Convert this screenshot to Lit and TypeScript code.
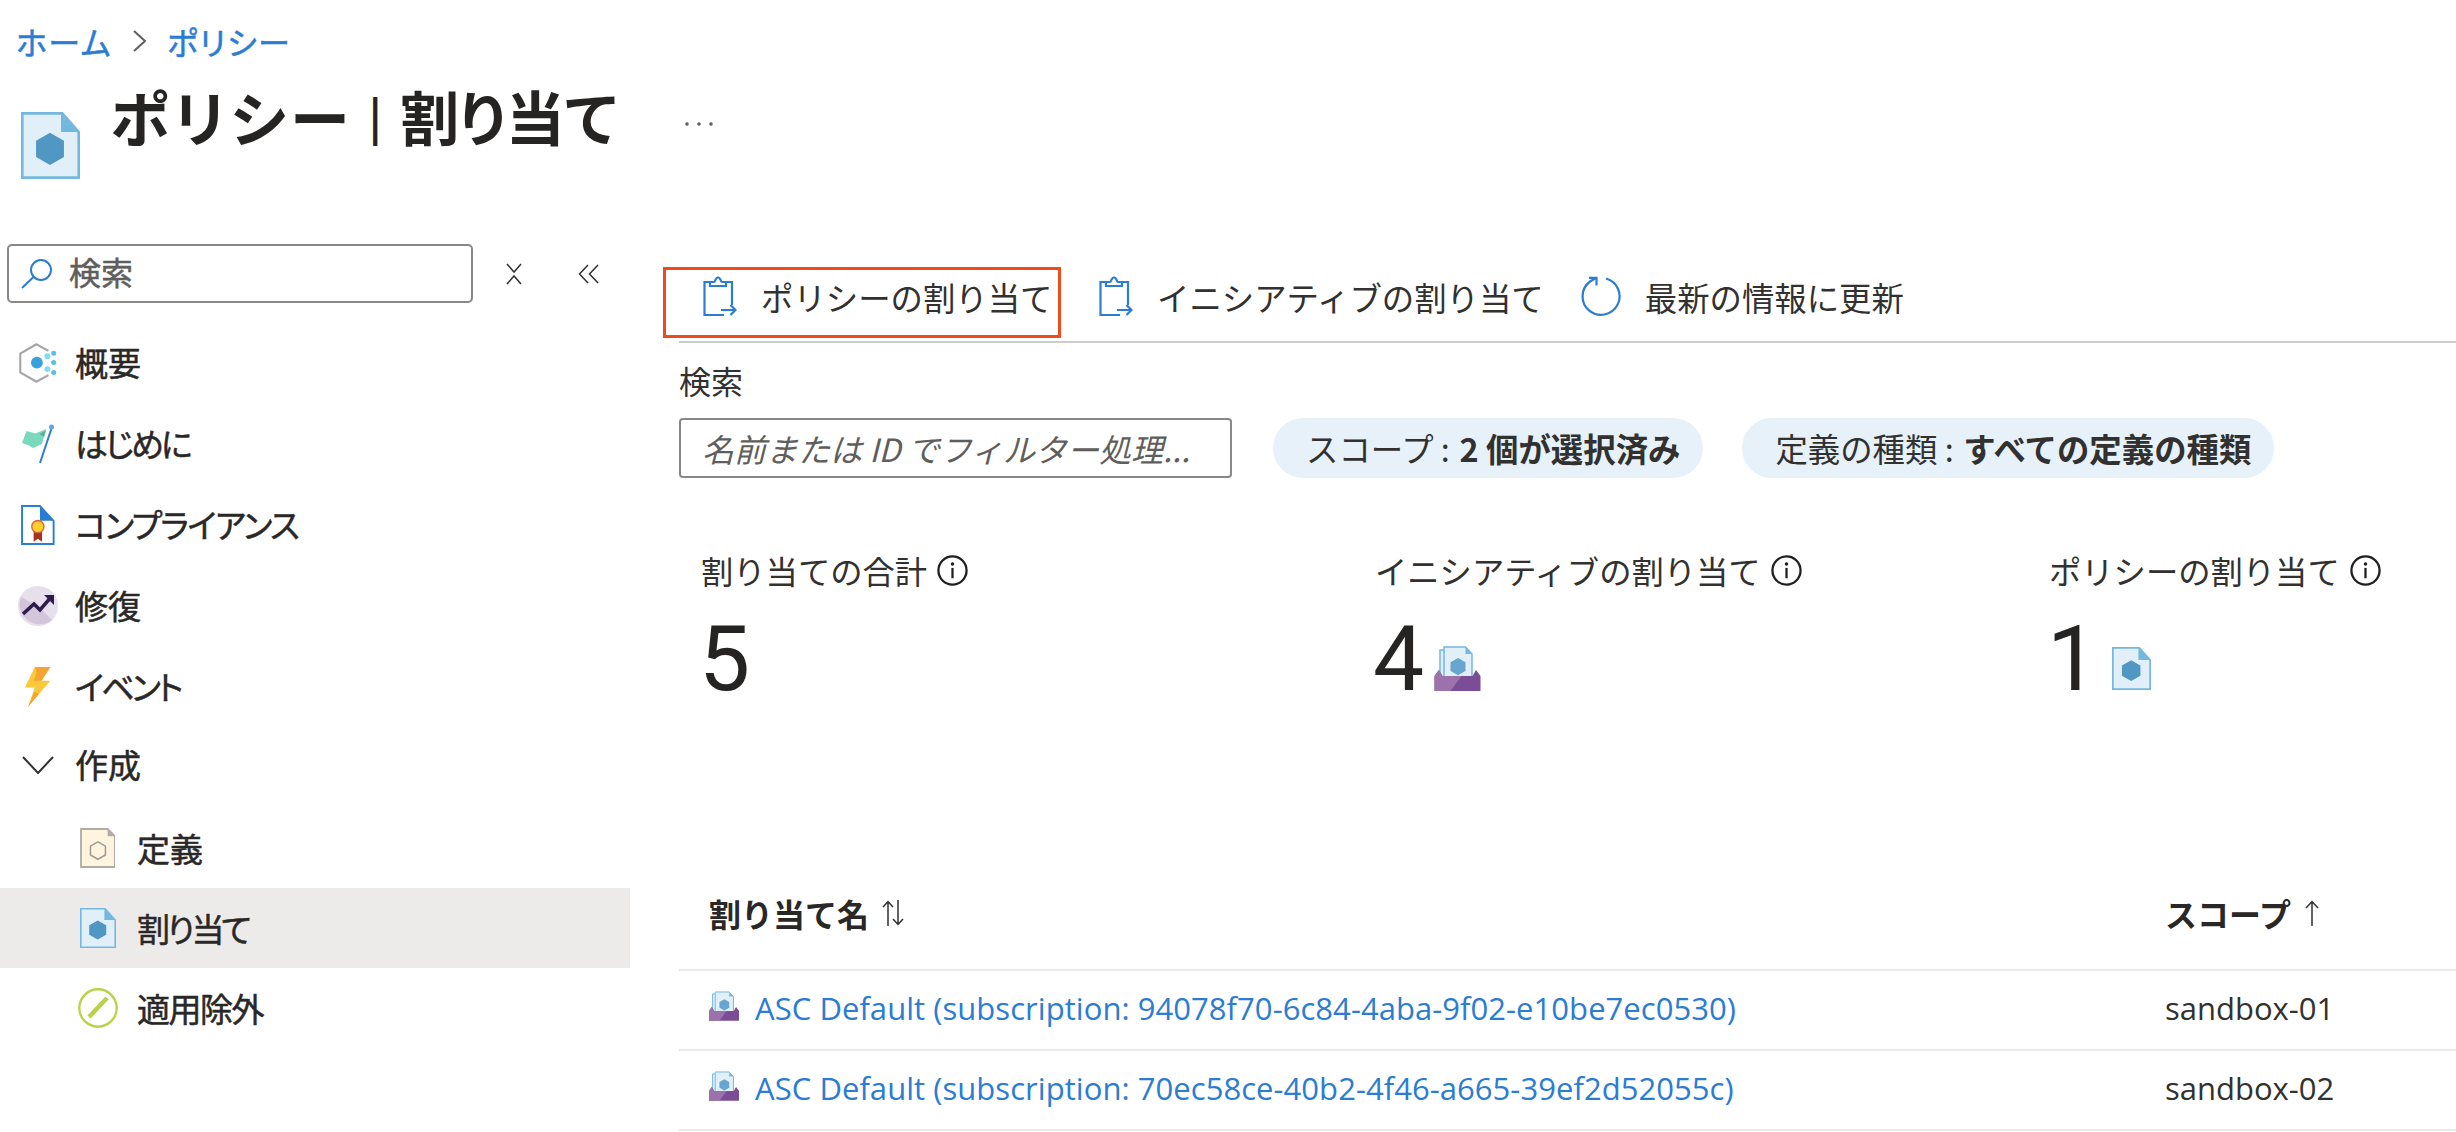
import { LitElement, html, css } from "lit";
import { customElement } from "lit/decorators.js";

const policyIcon = (cls: string) => html`<svg class=${cls} viewBox="0 0 18 20" preserveAspectRatio="none">
  <path d="M.4.4H12.6L17.6 6V19.6H.4Z" fill="#e1f0f8" stroke="#74b8e0" stroke-width=".8"/>
  <path d="M12.2.4L17.6 6H12.2Z" fill="#74b8e0"/>
  <path d="M8.85 6.2L13.1 8.6V13.4L8.85 15.8L4.6 13.4V8.6Z" fill="#5097c4"/>
</svg>`;

const initiativeIcon = (cls: string) => html`<svg class=${cls} viewBox="0 0 46 45">
  <path d="M5.500 4H20V32H5.500Z" fill="#e1f0f8" stroke="#74b8e0" stroke-width="1.500"/>
  <path d="M9.500 1H31L37.500 8V32H9.500Z" fill="#e1f0f8" stroke="#74b8e0" stroke-width="1.500"/>
  <path d="M31 1L37.500 8H31Z" fill="#74b8e0"/>
  <path d="M23.500 12L31 16.300V25L23.500 29.300L16 25V16.300Z" fill="#68a6cf"/>
  <path d="M0 30L4.300 24L8 30H38L41.500 24L46 30V45H0Z" fill="#7a4d96"/>
  <path d="M0 30L4.300 24L8 30H27L16 45H0Z" fill="#9b72a9"/>
</svg>`;

const clipboardIcon = () => html`<svg class="tool-ic" viewBox="0 0 34 40" fill="none" stroke="#2b7cd3" stroke-width="2.200">
  <path d="M29 29V6H23M7 6H1.500V39H21"/>
  <path d="M7 6H11C12.500 6 12 1.500 15 1.500C18 1.500 17.500 6 19 6H23V10H7Z" fill="#fff"/>
  <path d="M18 34H32M27.500 29L32.500 34L27.500 39"/>
</svg>`;

const infoIcon = html`<svg class="info" viewBox="0 0 30 30" fill="none">
  <circle cx="15" cy="15" r="13.600" stroke="#1f1f1f" stroke-width="2.200"/>
  <path d="M15 12.500V22.500" stroke="#1f1f1f" stroke-width="2.200"/>
  <circle cx="15" cy="8.600" r="1.700" fill="#1f1f1f"/>
</svg>`;

const ICONS: Record<string, unknown> = {
  overview: html`<svg class="nav-ic" viewBox="0 0 36 38" fill="none">
    <path d="M28 7.500L16.500 1.200L1.200 10V28L16.500 36.800L28 30.500" stroke="#a5a5a5" stroke-width="2"/>
    <circle cx="17" cy="18.700" r="5.600" fill="#3aa0dc"/>
    <circle cx="27" cy="12.500" r="2.800" fill="#7fdcf5"/>
    <circle cx="33" cy="9.800" r="2.400" fill="#58bfe6"/>
    <circle cx="33" cy="18.500" r="2.400" fill="#58bfe6"/>
    <circle cx="27" cy="24.800" r="2.800" fill="#7fdcf5"/>
    <circle cx="33" cy="28" r="2.400" fill="#58bfe6"/>
  </svg>`,
  flag: html`<svg class="nav-ic" viewBox="0 0 34 40" fill="none">
    <path d="M1 19L5.500 7L14.500 9.500L25 5L21 20L12 24L8 21.500Z" fill="#7ad8bd"/>
    <path d="M18.500 10L25 6.500L23 13Z" fill="#53b49a"/>
    <path d="M31 3L19 39" stroke="#2b7cd3" stroke-width="2"/>
    <circle cx="30.500" cy="3" r="2.500" fill="#5ea6ea"/>
  </svg>`,
  compliance: html`<svg class="nav-ic" viewBox="0 0 32 38" fill="none">
    <path d="M1 1H18L31 15V37H1Z" fill="#fff" stroke="#2b7cd3" stroke-width="1.800"/>
    <path d="M18 1L31 15H18Z" fill="#2b7cd3"/>
    <path d="M12 24V35L16 32L20 35V24Z" fill="#a5321f"/>
    <circle cx="16" cy="20.500" r="5.800" fill="#ffd02c" stroke="#e0603f" stroke-width="1.300"/>
  </svg>`,
  remediate: html`<svg class="nav-ic" viewBox="0 0 40 40" fill="none">
    <circle cx="20" cy="20" r="20" fill="#e6dfec"/>
    <path d="M3 11A20 20 0 0 0 34 34L22 22Z" fill="#d3c5da"/>
    <path d="M5 28L16 18L22 24L34 10" stroke="#2f1c4e" stroke-width="3.500"/>
    <path d="M26 9H36V19Z" fill="#2f1c4e"/>
  </svg>`,
  event: html`<svg class="nav-ic" viewBox="0 0 26 41">
    <path d="M10 0H26L17 14H26L3 41L10 21H0Z" fill="#f9c93a"/>
    <path d="M10 0H26L17 14H9L12 6Z" fill="#f3a431"/>
    <path d="M10 25L3 41L14 28Z" fill="#f3a431"/>
  </svg>`,
  definition: html`<svg class="nav-ic" viewBox="0 0 35 39" fill="none">
    <path d="M1 1H27L34 8V38H1Z" fill="#fff5df" stroke="#b0aca5" stroke-width="1.800"/>
    <path d="M27 1L34 8H27Z" fill="#b0aca5"/>
    <path d="M17.500 13.500L24.800 17.700V26.300L17.500 30.500L10.200 26.300V17.700Z" stroke="#a09c95" stroke-width="1.500"/>
  </svg>`,
  exempt: html`<svg class="nav-ic" viewBox="0 0 40 40" fill="none">
    <circle cx="20" cy="20" r="18.700" fill="#fff" stroke="#bcd14a" stroke-width="2.400"/>
    <path d="M11 29L29 10" stroke="#bcd14a" stroke-width="4.500"/>
  </svg>`,
};

@customElement("app-root")
export class AppRoot extends LitElement {
  static styles = css`
    :host {
      display: block;
      width: 2456px;
      height: 1132px;
      overflow: hidden;
      background: #fff;
      color: #292827;
      font-family: "Open Sans", "Noto Sans CJK JP", sans-serif;
      font-size: 31px;
    }
    a { color: #2b7cd3; text-decoration: none; }
    svg { display: block; flex: none; }

    .head { height: 244px; padding-left: 16px; box-sizing: border-box; }
    .crumbs { display: flex; align-items: center; height: 32px; padding-top: 25px; gap: 20px; font-size: 32px; font-family: "Noto Sans CJK JP", sans-serif; font-feature-settings: "palt"; -webkit-text-stroke: .5px #2b7cd3; letter-spacing: 1.500px; }
    .crumb-sep { width: 15px; height: 24px; }
    .title-row { display: flex; align-items: flex-start; margin-top: 30px; }
    .title-ic { width: 59px; height: 67px; margin: 25px 0 0 5px; }
    .title { display: flex; margin: -11px 0 0 30px; font: 700 60px/80px "Noto Sans CJK JP", sans-serif; font-feature-settings: "palt"; color: #252423; white-space: nowrap; }
    .title .name { letter-spacing: 5px; }
    .title .bar { font-family: "Open Sans", sans-serif; font-weight: 600; font-size: 48px; margin: 0 12px 0 8px; }
    .title .sub-name { font-size: 59px; }
    .more { margin: 3px 0 0 68px; }
    .more svg { width: 32px; height: 8px; margin-top: 30px; }

    .body { display: grid; grid-template-columns: 630px 1fr; }

    .side-search { display: flex; align-items: center; height: 59px; margin-left: 7px; }
    .sbox { display: flex; align-items: center; width: 466px; height: 59px; box-sizing: border-box; border: 2.500px solid #8a8886; border-radius: 5px; padding-left: 12px; }
    .sbox-ic { width: 32px; height: 30px; margin-right: 16px; }
    .sbox span { font: 400 32px/1 "Noto Sans CJK JP", sans-serif; color: #605e5c; -webkit-text-stroke: .5px #605e5c; margin-top: -5px; }
    .tool-sm { width: 18px; height: 22px; margin-left: 32px; }
    .tool-db { width: 22px; height: 20px; margin-left: 55px; }

    nav { margin-top: 19px; }
    .nav-row { display: flex; align-items: center; height: 81px; font: 400 33px/1 "Noto Sans CJK JP", sans-serif; font-feature-settings: "palt"; -webkit-text-stroke: .5px #292827; color: #292827; white-space: nowrap; }
    .nav-row span { margin-left: -1px; }
    .ls1 span { letter-spacing: -1.500px; }
    .ls3 span { letter-spacing: -3px; }
    .nav-cell { width: 76px; display: flex; justify-content: center; }
    .group span { margin-top: -6px; }
    .group .nav-cell { margin-top: -6px; }
    .sub { height: 80px; }
    .sub .nav-cell { width: 138px; padding-left: 57px; box-sizing: border-box; }
    .selected { background: #edebe9; }
    .nav-ic { height: 40px; width: auto; }
    .chev { width: 32px; height: 18px; }

    main { padding-top: 23px; min-width: 0; }
    .toolbar { display: flex; align-items: flex-start; height: 74px; margin-left: 49px; border-bottom: 2px solid #ccc; }
    .tool { display: flex; align-items: center; height: 71px; box-sizing: border-box; font: 400 32.400px/1 "Noto Sans CJK JP", sans-serif; color: #323130; white-space: nowrap; }
    .tool span { margin-top: -11px; }
    .boxed { width: 398px; border: 3.500px solid #f04a1d; margin-left: -16px; padding-left: 37px; }
    .tool-ic { width: 34px; height: 40px; margin-right: 24px; margin-top: -13px; }
    .plain { margin-left: 38px; }
    .refresh-tool { margin-left: 37px; }
    .refresh { width: 40px; height: 40px; margin-right: 24px; margin-top: -13px; }

    .filters { padding-left: 49px; }
    .flabel { font: 400 32px/40px "Noto Sans CJK JP", sans-serif; color: #323130; margin-top: 17px; }
    .frow { display: flex; align-items: center; margin-top: 18px; }
    input { width: 553px; height: 60px; box-sizing: border-box; border: 2.500px solid #8a8886; border-radius: 4px; padding: 0 0 0 21px; outline: none; font: italic 400 32px "Noto Sans CJK JP", sans-serif; background: #fff; }
    input::placeholder { color: #605e5c; opacity: 1; }
    .pill { display: flex; align-items: center; height: 60px; padding: 0 23px 0 33px; border-radius: 30px; background: #e6f1fa; font: 400 32.400px/1 "Noto Sans CJK JP", sans-serif; color: #323130; white-space: nowrap; }
    .pill b { font-weight: 700; margin-left: .3em; }
    .pill1 { margin-left: 41px; }
    .pill2 { margin-left: 39px; }

    .stats { display: grid; grid-template-columns: repeat(3, 674px); padding: 72px 0 0 71px; height: 382px; box-sizing: border-box; }
    .stat-label { display: flex; align-items: center; gap: 10px; height: 40px; font: 400 32.300px/40px "Noto Sans CJK JP", sans-serif; color: #323130; white-space: nowrap; }
    .info { width: 31px; height: 31px; }
    .stat-val { display: flex; align-items: flex-end; height: 80px; margin: 29px 0 0 -2px; font: 400 91px/80px Roboto, sans-serif; color: #252423; }
    .ic-init { width: 47px; height: 45px; margin: 0 0 8px 10px; }
    .ic-pol { width: 39px; height: 43px; margin: 0 0 9px 14px; }

    .table { margin-left: 49px; }
    .tr { display: grid; grid-template-columns: 1486px 1fr; height: 80px; align-items: center; border-bottom: 2px solid #edebe9; box-sizing: border-box; }
    .th { height: 111px; padding-bottom: 4px; font: 700 32px/1 "Noto Sans CJK JP", sans-serif; color: #292827; }
    .th div { display: flex; align-items: center; white-space: nowrap; }
    .th .c1 { padding-left: 30px; }
    .sort { width: 24px; height: 26px; margin-left: 12px; }
    .up { width: 14px; height: 26px; margin-left: 14px; }
    .c1-row { display: flex; align-items: center; padding-left: 30px; white-space: nowrap; margin-top: -4px; letter-spacing: .05px; }
    .row-ic { width: 30px; height: 30px; margin-right: 16px; margin-top: -4px; }
    .c2 { color: #323130; margin-top: -4px; }
    .th .c2 { color: inherit; margin-top: 0; }
  `;

  private nav(icon: string, label: string, extra = "") {
    return html`<div class="nav-row ${extra}"><div class="nav-cell">${ICONS[icon]}</div><span>${label}</span></div>`;
  }

  render() {
    return html`
      <header class="head">
        <div class="crumbs">
          <a href="#">ホーム</a>
          <svg class="crumb-sep" viewBox="0 0 15 24" fill="none" stroke="#605e5c" stroke-width="2"><path d="M2 2L13 12L2 22"/></svg>
          <a href="#">ポリシー</a>
        </div>
        <div class="title-row">
          ${policyIcon("title-ic")}
          <h1 class="title"><span class="name">ポリシー</span><span class="bar">|</span><span class="sub-name">割り当て</span></h1>
          <div class="more" aria-label="その他">
            <svg viewBox="0 0 32 8" fill="#605e5c"><circle cx="3" cy="4" r="1.800"/><circle cx="15" cy="4" r="1.800"/><circle cx="27" cy="4" r="1.800"/></svg>
          </div>
        </div>
      </header>
      <div class="body">
        <aside>
          <div class="side-search">
            <div class="sbox">
              <svg class="sbox-ic" viewBox="0 0 32 30" fill="none" stroke="#2b7cd3" stroke-width="2"><circle cx="20" cy="11" r="10"/><path d="M12.500 18L1 29"/></svg>
              <span>検索</span>
            </div>
            <svg class="tool-sm" viewBox="0 0 18 22" fill="none" stroke="#323130" stroke-width="1.500"><path d="M2 1L9 9L16 1M2 21L9 13L16 21"/></svg>
            <svg class="tool-db" viewBox="0 0 22 20" fill="none" stroke="#323130" stroke-width="1.500"><path d="M10 1L1.500 10L10 19M20 1L11.500 10L20 19"/></svg>
          </div>
          <nav>
            ${this.nav("overview", "概要")}
            ${this.nav("flag", "はじめに", "ls3")}
            ${this.nav("compliance", "コンプライアンス", "ls1")}
            ${this.nav("remediate", "修復")}
            ${this.nav("event", "イベント", "ls3")}
            <div class="nav-row group">
              <div class="nav-cell"><svg class="chev" viewBox="0 0 32 18" fill="none" stroke="#323130" stroke-width="2"><path d="M1 1L16 17L31 1"/></svg></div>
              <span>作成</span>
            </div>
            ${this.nav("definition", "定義", "sub")}
            <div class="nav-row sub selected ls3"><div class="nav-cell">${policyIcon("nav-ic")}</div><span>割り当て</span></div>
            ${this.nav("exempt", "適用除外", "sub ls1")}
          </nav>
        </aside>
        <main>
          <div class="toolbar">
            <div class="tool boxed">${clipboardIcon()}<span>ポリシーの割り当て</span></div>
            <div class="tool plain">${clipboardIcon()}<span>イニシアティブの割り当て</span></div>
            <div class="tool refresh-tool">
              <svg class="refresh" viewBox="0 0 40 40" fill="none" stroke="#2b7cd3" stroke-width="2.200"><path d="M25 2.500A18.500 18.500 0 1 1 9 5.500L15 2"/><path d="M8 1.800H15.500V9.500"/></svg>
              <span>最新の情報に更新</span>
            </div>
          </div>
          <section class="filters">
            <div class="flabel">検索</div>
            <div class="frow">
              <input placeholder="名前または ID でフィルター処理..." />
              <div class="pill pill1">スコープ : <b>2 個が選択済み</b></div>
              <div class="pill pill2">定義の種類 : <b>すべての定義の種類</b></div>
            </div>
          </section>
          <section class="stats">
            <div>
              <div class="stat-label">割り当ての合計 ${infoIcon}</div>
              <div class="stat-val"><span>5</span></div>
            </div>
            <div>
              <div class="stat-label">イニシアティブの割り当て ${infoIcon}</div>
              <div class="stat-val"><span>4</span>${initiativeIcon("ic-init")}</div>
            </div>
            <div>
              <div class="stat-label">ポリシーの割り当て ${infoIcon}</div>
              <div class="stat-val"><span>1</span>${policyIcon("ic-pol")}</div>
            </div>
          </section>
          <section class="table">
            <div class="tr th">
              <div class="c1">割り当て名
                <svg class="sort" viewBox="0 0 24 26" fill="none" stroke="#323130" stroke-width="1.500"><path d="M7 26V2M2 7L7 1.500L12 7M17 0V24M12 19L17 24.500L22 19"/></svg>
              </div>
              <div class="c2">スコープ
                <svg class="up" viewBox="0 0 14 26" fill="none" stroke="#323130" stroke-width="1.500"><path d="M7 26V2M1 8L7 1.500L13 8"/></svg>
              </div>
            </div>
            <div class="tr">
              <div class="c1-row">${initiativeIcon("row-ic")}<a href="#">ASC Default (subscription: 94078f70-6c84-4aba-9f02-e10be7ec0530)</a></div>
              <div class="c2">sandbox-01</div>
            </div>
            <div class="tr">
              <div class="c1-row">${initiativeIcon("row-ic")}<a href="#">ASC Default (subscription: 70ec58ce-40b2-4f46-a665-39ef2d52055c)</a></div>
              <div class="c2">sandbox-02</div>
            </div>
          </section>
        </main>
      </div>
    `;
  }
}
